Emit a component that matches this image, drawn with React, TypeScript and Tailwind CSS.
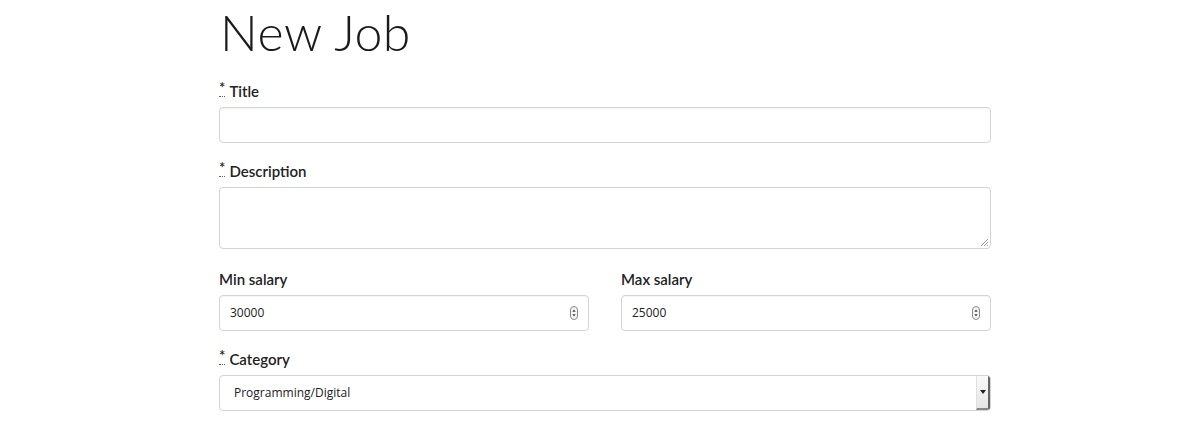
import React from "react";

const labelCls =
  "block text-[15px] font-semibold text-[#222] leading-5 h-5 mb-[6px]";
const inputBox =
  "h-9 w-full rounded-[4px] border border-[#d4d4d4] bg-white shadow-[inset_0_1px_1px_rgba(0,0,0,0.04)]";

function Req() {
  return (
    <span className="relative mr-[4px] inline-block border-b border-dotted border-[#666] leading-[10px] align-top mt-[1px] h-[15px]">
      *
    </span>
  );
}

function Spinner() {
  return (
    <svg width="8" height="14" viewBox="0 0 8 14" className="mr-[10px]">
      <rect x="0.5" y="0.5" width="7" height="13" rx="3.5" fill="#f4f4f4" stroke="#8a8a8a" />
      <path d="M2.3 5.8 L4 3.6 L5.7 5.8 Z" fill="#444" />
      <path d="M2.3 8.2 L4 10.4 L5.7 8.2 Z" fill="#444" />
    </svg>
  );
}

export default function App() {
  return (
    <div
      className="min-h-[421px] w-[1200px] bg-white"
      style={{ fontFamily: "Lato, 'Open Sans', sans-serif" }}
    >
      <div className="ml-[219px] w-[772px] pt-[3px]">
        <h1 className="text-[50px] font-light leading-[58px] text-[#1a1a1a] tracking-[0.5px] mb-[20px] ml-[1px]">
          New Job
        </h1>

        <label className={labelCls}>
          <Req />Title
        </label>
        <div className={inputBox + " mb-[18px]"} />

        <label className={labelCls}>
          <Req />Description
        </label>
        <div className="relative mb-[20px] h-[62px] w-full rounded-[4px] border border-[#d4d4d4] bg-white">
          <svg width="9" height="9" viewBox="0 0 9 9" className="absolute bottom-[1px] right-[1px]">
            <path d="M8 1 L1 8 M8 4 L4 8 M8 7 L7 8" stroke="#9a9a9a" strokeWidth="1" />
          </svg>
        </div>

        <div className="grid grid-cols-2 gap-8 mb-[18px]">
          <div>
            <label className={labelCls}>Min salary</label>
            <div className={inputBox + " flex items-center justify-between"}>
              <span className="pl-[10px] text-[12px] text-[#222]" style={{ fontFamily: "'Open Sans', sans-serif" }}>
                30000
              </span>
              <Spinner />
            </div>
          </div>
          <div>
            <label className={labelCls}>Max salary</label>
            <div className={inputBox + " flex items-center justify-between"}>
              <span className="pl-[10px] text-[12px] text-[#222]" style={{ fontFamily: "'Open Sans', sans-serif" }}>
                25000
              </span>
              <Spinner />
            </div>
          </div>
        </div>

        <label className={labelCls}>
          <Req />Category
        </label>
        <div className="flex h-9 w-full items-stretch overflow-hidden rounded-[4px] border border-[#d4d4d4] bg-white">
          <span
            className="flex flex-1 items-center pl-[14px] text-[12px] text-[#222]"
            style={{ fontFamily: "'Open Sans', sans-serif" }}
          >
            Programming/Digital
          </span>
          <div className="flex w-[14px] items-center justify-center border-l border-[#e0e0e0] border-r-2 border-b-2 border-r-[#666] border-b-[#888] bg-gradient-to-b from-[#fafafa] to-[#e6e6e6]">
            <svg width="6" height="4" viewBox="0 0 6 4">
              <path d="M0 0 L6 0 L3 4 Z" fill="#222" />
            </svg>
          </div>
        </div>
      </div>
    </div>
  );
}
